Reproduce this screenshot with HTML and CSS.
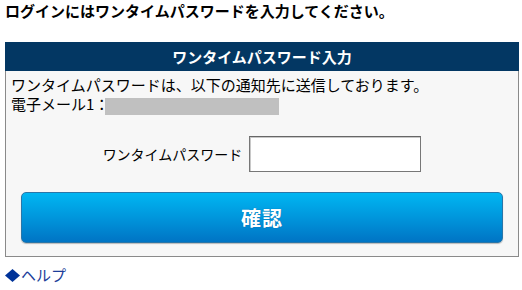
FILE: index.html
```html
<!DOCTYPE html>
<html lang="ja">
<head>
<meta charset="utf-8">
<title>ワンタイムパスワード入力</title>
<link rel="stylesheet" href="styles.css">
</head>
<body>
<h1 class="page-title">ログインにはワンタイムパスワードを入力してください。</h1>
<div class="panel">
  <div class="panel-head">ワンタイムパスワード入力</div>
  <div class="panel-body">
    <p class="notice">ワンタイムパスワードは、以下の通知先に送信しております。<br>電子メール1：<span class="masked"></span></p>
    <div class="otp-row">
      <label class="otp-label" for="otp">ワンタイムパスワード</label>
      <input class="otp-input" id="otp" type="text">
    </div>
    <button class="confirm-btn" type="button">確認</button>
  </div>
</div>
<a class="help-link" href="#"><svg class="diamond" width="15" height="13" viewBox="0 0 15 13" aria-hidden="true"><polygon points="7.5,0 15,6.5 7.5,13 0,6.5" fill="#003399"/></svg>ヘルプ</a>
</body>
</html>
```

FILE: styles.css
```css
html, body {
  margin: 0;
  padding: 0;
  background: #ffffff;
}
body {
  font-family: "Noto Sans CJK JP", "Liberation Sans", sans-serif;
  color: #000;
  width: 522px;
}
.page-title {
  margin: 0;
  padding: 0 0 0 5px;
  font-size: 15px;
  font-weight: bold;
  line-height: 22px;
}
.panel {
  margin: 20px 3px 0 5px;
}
.panel-head {
  background: #033763;
  color: #fff;
  font-size: 15px;
  font-weight: bold;
  height: 29px;
  line-height: 29px;
  text-align: center;
}
.panel-body {
  background: #f7f7f7;
  border: 1px solid #8a8a8a;
  border-top: 0;
  padding: 4px 5px 13px 5px;
}
.notice {
  margin: 0;
  font-size: 15px;
  line-height: 19px;
}
.masked {
  display: inline-block;
  width: 174px;
  height: 17px;
  background: #c0c0c0;
  vertical-align: -5px;
  margin-left: -4px;
}
.otp-row {
  display: flex;
  justify-content: center;
  align-items: center;
  gap: 7px;
  margin-top: 21px;
}
.otp-label {
  font-size: 14px;
  line-height: 20px;
}
.otp-input {
  box-sizing: border-box;
  width: 172px;
  height: 36px;
  margin: 0;
  border: 1px solid #777;
  border-top-color: #666;
  box-shadow: inset 1px 1px 0 #c8c8c8;
  background: #fff;
  padding: 0 4px;
}
.confirm-btn {
  display: block;
  box-sizing: border-box;
  width: calc(100% - 20px);
  margin: 20px 10px 0 10px;
  height: 51px;
  border: 1px solid #2a76a8;
  border-radius: 5px;
  background: linear-gradient(to bottom, #00b6f2 0%, #0096dc 50%, #0074c4 100%);
  color: #fff;
  font-family: "Noto Sans CJK JP", sans-serif;
  font-size: 20px;
  font-weight: bold;
  letter-spacing: 1px;
  text-shadow: 0 0 1px rgba(0, 60, 120, 0.6);
  box-shadow: 0 1px 1px rgba(0, 0, 0, 0.25);
  cursor: pointer;
}
.help-link {
  display: inline-flex;
  align-items: center;
  margin: 8px 0 0 5px;
  font-size: 15px;
  line-height: 20px;
  color: #1b3d99;
  text-decoration: none;
}
.diamond {
  display: block;
  margin-right: 1px;
}
```
